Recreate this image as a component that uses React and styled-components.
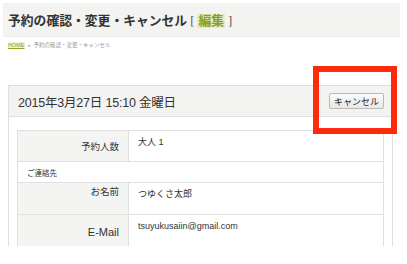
import React from 'react'
import styled, { createGlobalStyle } from 'styled-components'

const GlobalStyle = createGlobalStyle`
  html, body {
    margin: 0;
    padding: 0;
    background: #ffffff;
  }
  body {
    font-family: 'Liberation Sans', 'Noto Sans CJK JP', sans-serif;
    color: #333;
  }
`

const Page = styled.div`
  position: relative;
  width: 407px;
  height: 264px;
  overflow: hidden;
  background: #fff;
`

const TitleBar = styled.div`
  margin: 3px 7px 0 3px;
  height: 33px;
  background: #f3f3f1;
  border-bottom: 1px solid #ebebe8;
  display: flex;
  align-items: center;
  padding-left: 5px;
`

const Title = styled.h1`
  margin: 0;
  font-family: 'Liberation Serif', 'Noto Sans CJK JP', serif;
  font-size: 12.8px;
  font-weight: 700;
  color: #333;
  white-space: nowrap;
`

const Bracket = styled.span`
  font-weight: 400;
  color: #555;
  margin: 0 3px;
`

const EditLink = styled.span`
  color: #86a01f;
  background: #e6ecc8;
  padding: 0 1px;
`

const Crumbs = styled.div`
  margin: 4px 0 0 8px;
  font-size: 5.5px;
  color: #999;
  display: flex;
  gap: 3px;
  align-items: center;
  white-space: nowrap;
`

const HomeLink = styled.a`
  color: #8aa52a;
  text-decoration: underline;
  background: #eef2d6;
`

const Clip = styled.div`
  height: 161px;
  overflow: hidden;
  margin-top: 36px;
`

const Panel = styled.div`
  margin-left: 8px;
  width: 383px;
  border: 1px solid #dededc;
  border-bottom: none;
`

const PanelHead = styled.div`
  height: 30px;
  background: #f3f3f1;
  border-bottom: 1px solid #e0e0de;
  display: flex;
  align-items: center;
  justify-content: space-between;
  padding: 0 8px 0 9px;
`

const DateText = styled.div`
  font-size: 12.5px;
  color: #333;
  letter-spacing: -0.2px;
`

const CancelButton = styled.button`
  font-family: 'Liberation Sans', 'Noto Sans CJK JP', sans-serif;
  font-size: 9px;
  color: #222;
  height: 16px;
  width: 55px;
  padding: 0;
  background: linear-gradient(#fbfbfb, #e8e8e8);
  border: 1px solid #b9b9b9;
  border-radius: 2px;
`

const PanelBody = styled.div`
  padding: 13px 8px 0 8px;
`

const Table = styled.table`
  width: 100%;
  border-collapse: collapse;
  font-size: 9px;
`

const Label = styled.th`
  width: 111px;
  height: ${p => p.h}px;
  box-sizing: border-box;
  background: #f4f4f2;
  border: 1px solid #e0e0de;
  text-align: right;
  font-weight: 400;
  font-size: ${p => p.fs || 9.5}px;
  line-height: 14px;
  padding: ${p => p.pt}px 9px 0 0;
  vertical-align: top;
  color: #333;
`

const Value = styled.td`
  border: 1px solid #e0e0de;
  vertical-align: top;
  line-height: 14px;
  padding: 4px 0 0 9px;
  color: #333;
`

const Section = styled.td`
  border: 1px solid #e0e0de;
  height: 20px;
  padding: 0 0 0 9px;
  font-size: 7.5px;
  color: #333;
`

const Highlight = styled.div`
  position: absolute;
  left: 313px;
  top: 66px;
  width: 72px;
  height: 56px;
  border: 6px solid #ff2a0c;
`

export default function App() {
  return (
    <Page>
      <GlobalStyle />
      <TitleBar>
        <Title>
          予約の確認・変更・キャンセル<Bracket>[</Bracket><EditLink>編集</EditLink><Bracket>]</Bracket>
        </Title>
      </TitleBar>
      <Crumbs>
        <HomeLink>HOME</HomeLink>
        <span>»</span>
        <span>予約の確認・変更・キャンセル</span>
      </Crumbs>
      <Clip>
        <Panel>
          <PanelHead>
            <DateText>2015年3月27日 15:10 金曜日</DateText>
            <CancelButton>キャンセル</CancelButton>
          </PanelHead>
          <PanelBody>
            <Table>
              <tbody>
                <tr>
                  <Label h={31} pt={9}>予約人数</Label>
                  <Value>大人 1</Value>
                </tr>
                <tr>
                  <Section colSpan={2}>ご連絡先</Section>
                </tr>
                <tr>
                  <Label h={32} pt={2}>お名前</Label>
                  <Value>つゆくさ太郎</Value>
                </tr>
                <tr>
                  <Label h={40} pt={10} fs={11}>E-Mail</Label>
                  <Value>tsuyukusaiin@gmail.com</Value>
                </tr>
              </tbody>
            </Table>
          </PanelBody>
        </Panel>
      </Clip>
      <Highlight />
    </Page>
  )
}
